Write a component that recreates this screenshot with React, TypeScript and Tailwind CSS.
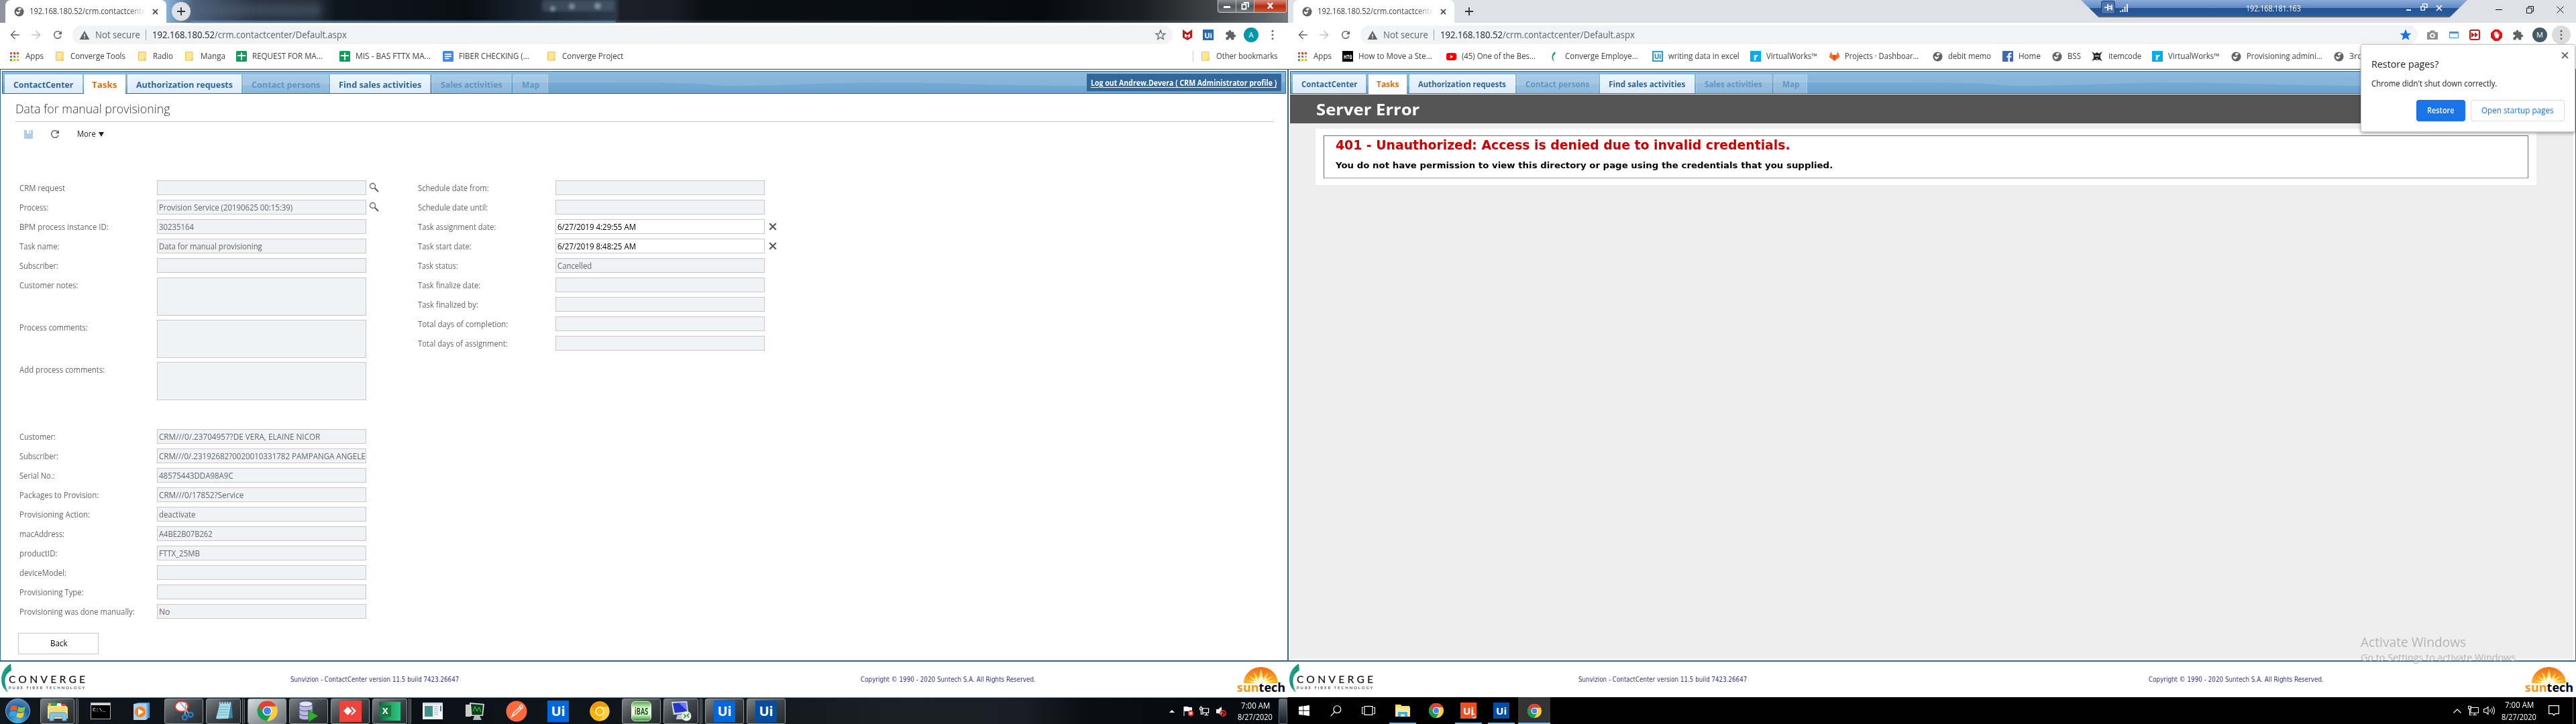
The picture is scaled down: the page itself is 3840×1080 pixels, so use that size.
import React, { useLayoutEffect, useRef, useState } from "react";

/* Text that is fitted horizontally to the width of its box. */
function T({ c, children }: { c: string; children: React.ReactNode }) {
  const outer = useRef<HTMLSpanElement>(null);
  const inner = useRef<HTMLSpanElement>(null);
  const [scale, setScale] = useState(1);
  useLayoutEffect(() => {
    if (outer.current && inner.current && inner.current.offsetWidth > 0) {
      setScale(outer.current.clientWidth / inner.current.offsetWidth);
    }
  }, []);
  return (
    <span ref={outer} className={`flex shrink-0 whitespace-pre leading-none ${c}`}>
      <span ref={inner} className="shrink-0 origin-left" style={{ transform: `scaleX(${scale})` }}>
        {children}
      </span>
    </span>
  );
}

/* ---------- icons ---------- */

type C = { c: string };

const Globe = ({ c }: C) => (
  <svg viewBox="0 0 16 16" className={`shrink-0 ${c}`}>
    <circle cx="8" cy="8" r="7.5" fill="#5f6368" />
    <path d="M9.5 2.2c-2 .3-3.6 1.6-3.4 2.9.2 1 1.800.9 2.600 1.500.8.7.2 1.700-.6 2-1 .4-3.300-.4-4.600-1.400l-.7.9c.3 2.300 2 3.900 3.800 4.500.3-1.400 1.200-1.900 2.200-2.600 1.300-.9 1.400-2.500.4-3.400C8.300 5.800 9.700 4.600 11 4.700l.9-1c-.6-.7-1.500-1.200-2.400-1.500z" fill="#fff" />
  </svg>
);
const Folder = ({ c }: C) => (
  <svg viewBox="0 0 12 14" className={`h-[14px] w-[12px] shrink-0 ${c}`}>
    <path d="M.5.5h10.500v9l.6.600v3H.5z" fill="#ffe694" stroke="#e8c34f" />
    <path d="M9.500 9.500v4" stroke="#e8c34f" />
  </svg>
);
const Apps = ({ c }: C) => (
  <svg viewBox="0 0 13 13" className={`h-[13px] w-[13px] shrink-0 ${c}`}>
    <path d="M0 0h3v3H0zM5 0h3v3H5zM10 0h3v3h-3z" fill="#ea4335" />
    <path d="M0 5h3v3H0z" fill="#34a853" />
    <path d="M5 5h3v3H5z" fill="#4285f4" />
    <path d="M10 5h3v3h-3zM5 10h3v3H5zM10 10h3v3h-3z" fill="#f9b30b" />
    <path d="M0 10h3v3H0z" fill="#34a853" />
  </svg>
);
const Sheet = ({ c }: C) => (
  <svg viewBox="0 0 16 16" className={`size-4 shrink-0 ${c}`}>
    <rect width="16" height="16" rx="1.500" fill="#0f9d58" />
    <path d="M7 2.500h2V6h5v2H9v5.500H7V8H2V6h5z" fill="#fff" />
  </svg>
);
const Doc = ({ c }: C) => (
  <svg viewBox="0 0 16 16" className={`size-4 shrink-0 ${c}`}>
    <rect width="16" height="16" rx="1.500" fill="#4285f4" />
    <path d="M3 4h10v1.700H3zM3 7.200h10v1.700H3zM3 10.500h6.500v1.700H3z" fill="#fff" />
  </svg>
);
const Puzzle = ({ c }: C) => (
  <svg viewBox="0 0 24 24" className={`size-[17px] shrink-0 ${c}`}>
    <path d="M20.500 11H19V7c0-1.100-.9-2-2-2h-4V3.500a2.500 2.500 0 0 0-5 0V5H4c-1.100 0-2 .9-2 2v3.800h1.500a2.700 2.700 0 0 1 0 5.400H2V20c0 1.100.9 2 2 2h3.800v-1.500a2.700 2.700 0 0 1 5.400 0V22H17c1.100 0 2-.9 2-2v-4h1.500a2.500 2.500 0 0 0 0-5z" fill="#5f6368" />
  </svg>
);
const Reload = ({ c }: C) => (
  <svg viewBox="0 0 24 24" className={`shrink-0 ${c}`}>
    <path d="M17.650 6.350A8 8 0 1 0 19.730 14h-2.080A6 6 0 1 1 12 6c1.660 0 3.140.69 4.220 1.780L13 11h7V4z" fill="#5f6368" />
  </svg>
);
const Arrow = ({ c, fill }: C & { fill: string }) => (
  <svg viewBox="0 0 24 24" className={`size-[18px] shrink-0 ${c}`}>
    <path d="M21 11H7l6.300-6.300L12 3.300 3.300 12l8.700 8.700 1.300-1.400L7 13h14z" fill={fill} />
  </svg>
);
const Star = ({ c, full }: C & { full?: boolean }) => (
  <svg viewBox="0 0 24 24" className={`size-[18px] shrink-0 ${c}`}>
    <path d="M12 3l2.500 6.400 6.700.4-5.200 4.300 1.800 6.500L12 17l-5.800 3.600L8 14.100 2.800 9.800l6.700-.4z" fill={full ? "#1a73e8" : "none"} stroke={full ? "#1a73e8" : "#5f6368"} strokeWidth="1.700" />
  </svg>
);
const Cross = ({ c, stroke }: C & { stroke: string }) => (
  <svg viewBox="0 0 10 10" className={`shrink-0 ${c}`}>
    <path d="M1 1l8 8M9 1L1 9" stroke={stroke} strokeWidth="1.700" />
  </svg>
);
const Chrome = ({ c, a = "#db4437", b = "#0f9d58", y = "#ffcd40", i = "#4285f4" }: C & { a?: string; b?: string; y?: string; i?: string }) => (
  <svg viewBox="0 0 48 48" className={`shrink-0 ${c}`}>
    <circle cx="24" cy="24" r="22" fill={y} />
    <path d="M4.950 13A22 22 0 0 1 43.400 14H24A10 10 0 0 0 15.340 29z" fill={a} />
    <path d="M4.950 13L15.340 29A10 10 0 0 0 32.660 29L23 46A22 22 0 0 1 4.950 13z" fill={b} />
    <circle cx="24" cy="24" r="10" fill="#fff" />
    <circle cx="24" cy="24" r="8" fill={i} />
  </svg>
);
const Explorer = ({ c }: C) => (
  <svg viewBox="0 0 32 30" className={`shrink-0 ${c}`}>
    <path d="M2 3h8l2 2h16v4H2z" fill="#e8b83c" />
    <path d="M6 2h8v5H6z" fill="#3c9a4c" />
    <path d="M15 3h6v4h-6z" fill="#f3f3f3" />
    <path d="M22 4h6v4h-6z" fill="#c94a3c" />
    <path d="M1 7h28l2 3v16H1z" fill="#fbe08a" />
    <path d="M3 9h25v14H3z" fill="#f8d873" />
    <path d="M4 29V20c0-2 1-3 3-3h19c2 0 3 1 3 3v9h-6v-6H10v6z" fill="#86c5ea" stroke="#4f97c9" />
  </svg>
);
const Leaf = ({ c }: C) => (
  <svg viewBox="0 0 16 46" className={`shrink-0 ${c}`}>
    <defs>
      <linearGradient id="leaf" x1="0" y1="0" x2="1" y2="1">
        <stop offset="0" stopColor="#2ab7a0" />
        <stop offset="0.500" stopColor="#17927a" />
        <stop offset="1" stopColor="#7fd8c4" />
      </linearGradient>
    </defs>
    <path d="M15 0C6 5 0 14 0 25c0 9 4 17 11 21C7 38 5 31 6 24 7 17 12 13 16 11z" fill="url(#leaf)" />
  </svg>
);
const Sun = () => (
  <svg viewBox="0 0 51 24" className="h-[24px] w-[51px] shrink-0">
    <defs>
      <linearGradient id="sun" x1="0" y1="0" x2="0" y2="1">
        <stop offset="0" stopColor="#f26a1b" />
        <stop offset="1" stopColor="#fbb52a" />
      </linearGradient>
    </defs>
    <path d="M0 24A25.500 24 0 0 1 51 24z" fill="url(#sun)" />
    <path d="M14 24L5 20l10 1-7-8 10 6-3-12 7 10 4-14 3 14 7-9-3 10 11-5-8 7 11 0-10 4z" fill="#fde36a" />
    <path d="M17 24l-3-3 5 0-3-5 6 4 4-9 3 9 6-4-3 5 5 0-4 3z" fill="#fffbe0" />
  </svg>
);

const Ui = ({ c, children = "Ui" }: { c: string; children?: React.ReactNode }) => (
  <span className={`flex shrink-0 items-center justify-center font-['Noto_Sans'] font-bold leading-none ${c}`}>{children}</span>
);

/* ---------- browser chrome ---------- */

function ChromeTab() {
  return (
    <div className="ml-[8px] flex h-full w-[240px] shrink-0 items-center rounded-t-[8px] bg-white pl-[13px]">
      <Globe c="size-[15px]" />
      <T c="ml-[8px] w-[173px] text-[12px] text-[#3c4043] [mask-image:linear-gradient(90deg,#000_85%,transparent)]">192.168.180.52/crm.contactcente</T>
      <Cross c="ml-[10px] size-[9px]" stroke="#3c4043" />
    </div>
  );
}

function Omnibox({ c, star }: { c: string; star?: boolean }) {
  return (
    <>
      <Arrow c="ml-[13px]" fill="#5f6368" />
      <Arrow c="ml-[14px] rotate-180" fill="#bdc1c6" />
      <Reload c="ml-[14px] size-[18px]" />
      <div className={`ml-[13px] flex h-[28px] shrink-0 items-center rounded-full bg-[#f1f3f4] pl-[10px] ${c}`}>
        <svg viewBox="0 0 16 14" className="h-[13px] w-[16px] shrink-0">
          <path d="M8 0l8 14H0z" fill="#5f6368" />
          <path d="M7.200 5h1.600v4.500H7.200zM7.200 10.500h1.600V12H7.200z" fill="#fff" />
        </svg>
        <T c="ml-[8px] w-[67px] text-[14px] text-[#5f6368]">Not secure</T>
        <span className="ml-[8px] h-[16px] w-px shrink-0 bg-[#9aa0a6]" />
        <T c="ml-[9px] w-[93px] text-[14px] text-[#202124]">192.168.180.52</T>
        <T c="w-[197px] text-[14px] text-[#5f6368]">/crm.contactcenter/Default.aspx</T>
        <span className="grow" />
        <Star c="mr-[9px]" full={star} />
      </div>
    </>
  );
}

const Dots = ({ c }: C) => (
  <svg viewBox="0 0 4 16" className={`h-[14px] w-[4px] shrink-0 ${c}`}>
    <path d="M.5 0h3v3h-3zM.5 6.500h3v3h-3zM.5 13h3v3h-3z" fill="#5f6368" />
  </svg>
);

const B = ({ c, children }: { c: string; children: React.ReactNode }) => <T c={`text-[12px] text-[#3c4043] ${c}`}>{children}</T>;

/* ---------- web application frame ---------- */

type TabItem = { label: string; box: string; text: string; kind: "on" | "off" | "active" };

function AppHeader({ tabs, y, children }: { tabs: TabItem[]; y: string; children?: React.ReactNode }) {
  return (
    <div className="relative ml-[2px] mt-[2px] flex h-[34px] w-[1914px] shrink-0 items-end border border-[#336699] bg-gradient-to-b from-[#8cbadd] to-[#82b1d8]">
      <svg viewBox="0 0 1912 32" preserveAspectRatio="none" className="absolute inset-0 h-full w-full">
        <defs>
          <linearGradient id="wave" x1="0" y1="0" x2="0" y2="1">
            <stop offset="0" stopColor="#76abd6" />
            <stop offset="1" stopColor="#6ba1d1" />
          </linearGradient>
        </defs>
        <path d="M0 16C120 22 240 22 360 20S600 16 860 16 1020 21 1090 21 1240 16 1320 16 1500 21 1600 21 1800 17 1912 16V32H0z" fill="url(#wave)" />
      </svg>
      <div className="relative flex items-end">
        {tabs.map((t) => (
          <div
            key={t.label}
            className={`flex shrink-0 items-center ${t.box} ${
              t.kind === "active"
                ? "-mb-px h-[29px] bg-[#fcfdfe] text-[#e0700f]"
                : t.kind === "on"
                  ? "h-[28px] border-x border-t border-white/60 bg-gradient-to-b from-[#edf6fd] to-[#dbeafa] text-[#2f6699]"
                  : "h-[28px] border-x border-t border-white/20 bg-white/25 text-[#6096c3]"
            }`}
          >
            <T c={`text-[13px] font-bold ${y} ${t.text}`}>{t.label}</T>
          </div>
        ))}
      </div>
      {children}
    </div>
  );
}

const leftTabs: TabItem[] = [
  { label: "ContactCenter", box: "ml-[3px] w-[116px] pl-[12px]", text: "w-[89px]", kind: "on" },
  { label: "Tasks", box: "ml-[2px] w-[62px] pl-[12px]", text: "w-[37px]", kind: "active" },
  { label: "Authorization requests", box: "ml-[3px] w-[170px] pl-[12px]", text: "w-[144px]", kind: "on" },
  { label: "Contact persons", box: "ml-[2px] w-[128px] pl-[12px]", text: "w-[102px]", kind: "off" },
  { label: "Find sales activities", box: "ml-[2px] w-[149px] pl-[12px]", text: "w-[123px]", kind: "on" },
  { label: "Sales activities", box: "ml-[3px] w-[118px] pl-[12px]", text: "w-[92px]", kind: "off" },
  { label: "Map", box: "ml-[3px] w-[52px] pl-[12px]", text: "w-[26px]", kind: "off" },
];
const rightTabs: TabItem[] = [
  { label: "ContactCenter", box: "ml-[3px] w-[109px] pl-[12px]", text: "w-[83px]", kind: "on" },
  { label: "Tasks", box: "ml-[4px] w-[57px] pl-[12px]", text: "w-[33px]", kind: "active" },
  { label: "Authorization requests", box: "ml-[4px] w-[158px] pl-[12px]", text: "w-[131px]", kind: "on" },
  { label: "Contact persons", box: "ml-[2px] w-[122px] pl-[12px]", text: "w-[95px]", kind: "off" },
  { label: "Find sales activities", box: "ml-[2px] w-[141px] pl-[12px]", text: "w-[114px]", kind: "on" },
  { label: "Sales activities", box: "ml-[2px] w-[113px] pl-[12px]", text: "w-[86px]", kind: "off" },
  { label: "Map", box: "ml-[3px] w-[50px] pl-[12px]", text: "w-[25px]", kind: "off" },
];

function Footer() {
  return (
    <div className="flex h-[53px] shrink-0 bg-white font-['DejaVu_Sans_Condensed','DejaVu_Sans',sans-serif]">
      <Leaf c="ml-[2px] mt-[2px] h-[45px] w-[15px]" />
      <div className="-ml-[4px] mt-[19px] flex w-[116px] flex-col font-['Lato',sans-serif]">
        <T c="w-[118px] text-[15px] font-semibold tracking-[4px] text-[#222]">CONVERGE</T>
        <T c="mt-[2px] w-[115px] text-[6px] font-semibold tracking-[2px] text-[#444]">PURE FIBER TECHNOLOGY</T>
      </div>
      <T c="ml-[304px] mt-[21px] w-[251px] text-[11px] text-[#333388]">Sunvizion - ContactCenter version 11.5 build 7423.26647</T>
      <T c="ml-[599px] mt-[21px] w-[261px] text-[11px] text-[#333388]">Copyright © 1990 - 2020 Suntech S.A. All Rights Reserved.</T>
      <div className="ml-[300px] mt-[8px] flex flex-col items-start">
        <span className="ml-[10px] flex">
          <Sun />
        </span>
        <T c="-mt-[3px] w-[72px] font-['Open_Sans'] text-[18px] font-bold text-black">
          <span className="text-[#f7941d]">sun</span>tech
        </T>
      </div>
    </div>
  );
}

/* ---------- form ---------- */

type Field = { label: string; lw: string; value?: string; vw?: string; tall?: boolean; edit?: boolean; icon?: "search" | "clear" };

function Row({ f }: { f: Field }) {
  return (
    <div className={`flex items-start ${f.tall ? "h-[57px]" : "h-[23px]"}`}>
      <div className="flex h-[23px] w-[205px] shrink-0 items-center text-[12px] text-[#666]">
        <T c={f.lw}>{f.label}</T>
      </div>
      <div className={`flex w-[312px] shrink-0 overflow-hidden border border-[#c8c8c8] pl-[2px] pt-[5px] ${f.tall ? "h-[57px]" : "h-[22px]"} ${f.edit ? "bg-white text-black" : "bg-[#f1f2f5] text-[#666]"}`}>
        {f.value && <T c={`text-[12px] ${f.vw}`}>{f.value}</T>}
      </div>
      {f.icon === "search" && (
        <svg viewBox="0 0 15 15" className="ml-[4px] mt-[3px] size-[15px] shrink-0">
          <circle cx="5.500" cy="5.500" r="4" fill="none" stroke="#666" strokeWidth="1.300" />
          <path d="M8.500 8.500l5.500 5.500" stroke="#555" strokeWidth="2" />
        </svg>
      )}
      {f.icon === "clear" && <Cross c="ml-[6px] mt-[5px] size-[12px]" stroke="#555" />}
    </div>
  );
}

const mainFields: Field[] = [
  { label: "CRM request", lw: "w-[68px]", icon: "search" },
  { label: "Process:", lw: "w-[43px]", value: "Provision Service (20190625 00:15:39)", vw: "w-[199px]", icon: "search" },
  { label: "BPM process instance ID:", lw: "w-[133px]", value: "30235164", vw: "w-[52px]" },
  { label: "Task name:", lw: "w-[59px]", value: "Data for manual provisioning", vw: "w-[154px]" },
  { label: "Subscriber:", lw: "w-[58px]" },
  { label: "Customer notes:", lw: "w-[87px]", tall: true },
  { label: "Process comments:", lw: "w-[102px]", tall: true },
  { label: "Add process comments:", lw: "w-[127px]", tall: true },
];
const dateFields: Field[] = [
  { label: "Schedule date from:", lw: "w-[106px]" },
  { label: "Schedule date until:", lw: "w-[104px]" },
  { label: "Task assignment date:", lw: "w-[116px]", value: "6/27/2019 4:29:55 AM", vw: "w-[117px]", edit: true, icon: "clear" },
  { label: "Task start date:", lw: "w-[80px]", value: "6/27/2019 8:48:25 AM", vw: "w-[117px]", edit: true, icon: "clear" },
  { label: "Task status:", lw: "w-[60px]", value: "Cancelled", vw: "w-[51px]" },
  { label: "Task finalize date:", lw: "w-[93px]" },
  { label: "Task finalized by:", lw: "w-[90px]" },
  { label: "Total days of completion:", lw: "w-[134px]" },
  { label: "Total days of assignment:", lw: "w-[134px]" },
];
const provisioningFields: Field[] = [
  { label: "Customer:", lw: "w-[54px]", value: "CRM///0/.23704957?DE VERA, ELAINE NICOR", vw: "w-[240px]" },
  { label: "Subscriber:", lw: "w-[58px]", value: "CRM///0/.23192682?0020010331782 PAMPANGA ANGELE", vw: "w-[308px]" },
  { label: "Serial No.:", lw: "w-[53px]", value: "48575443DDA98A9C", vw: "w-[111px]" },
  { label: "Packages to Provision:", lw: "w-[118px]", value: "CRM///0/17852?Service", vw: "w-[126px]" },
  { label: "Provisioning Action:", lw: "w-[105px]", value: "deactivate", vw: "w-[54px]" },
  { label: "macAddress:", lw: "w-[67px]", value: "A4BE2B07B262", vw: "w-[80px]" },
  { label: "productID:", lw: "w-[56px]", value: "FTTX_25MB", vw: "w-[61px]" },
  { label: "deviceModel:", lw: "w-[70px]" },
  { label: "Provisioning Type:", lw: "w-[96px]" },
  { label: "Provisioning was done manually:", lw: "w-[172px]", value: "No", vw: "w-[16px]" },
];

/* ---------- windows ---------- */

function LeftWindow() {
  return (
    <div className="flex h-[1080px] w-[1920px] shrink-0 flex-col overflow-hidden bg-white">
      <div className="relative flex h-[34px] shrink-0 items-center bg-[linear-gradient(90deg,#8d949c_0,#8d949c_8px,#86aed6_250px,#4b6079_290px,#2a3542_380px,#26313d_470px,#0e161d_500px,#090e14_700px,#1f2b38_820px,#2b3846_918px,#1b1e26_925px,#1a1d25_1000px,#0a0f13_1050px,#070b10_1560px,#1a1e22_1700px,#333639_1770px,#5c6063_1880px,#777b7e_1920px)]">
        <span className="absolute bottom-0 left-[284px] h-[3px] w-[634px] bg-[#6f9cc9]/80 blur-[1px]" />
        <span className="absolute bottom-0 left-[920px] h-[5px] w-[1000px] bg-gradient-to-b from-transparent to-[#5a7390]/50" />
        <span className="absolute left-[290px] top-[6px] h-[18px] w-[190px] rounded-full bg-[#55677c]/40 blur-[5px]" />
        <span className="absolute left-[808px] top-0 h-[17px] w-[108px] rounded bg-[#66798d]/40 blur-[2px]" />
        <span className="absolute left-[820px] top-[9px] size-[8px] rounded-full bg-[#a9bccf]/60 blur-[2px]" />
        <span className="absolute left-[848px] top-[5px] size-[9px] rounded-full bg-[#a9bccf]/60 blur-[2px]" />
        <span className="absolute left-[886px] top-[4px] size-[10px] rounded-full bg-[#a9bccf]/60 blur-[2px]" />
        <div className="relative flex h-full w-full items-center">
          <ChromeTab />
          <span className="ml-[8px] flex size-[28px] items-center justify-center rounded-full bg-[#dee1e6]">
            <svg viewBox="0 0 12 12" className="size-[12px]">
              <path d="M6 0v12M0 6h12" stroke="#333" strokeWidth="1.800" />
            </svg>
          </span>
          <span className="grow" />
          <div className="mr-[2px] flex h-[19px] items-stretch self-start overflow-hidden rounded-b-[4px] border border-t-0 border-[#c9cdd1]">
            <span className="flex w-[27px] items-end justify-center border-r border-[#bbb] bg-gradient-to-b from-[#8d9195] via-[#53575b] to-[#75797d] pb-[6px]">
              <span className="h-[3px] w-[10px] bg-white" />
            </span>
            <span className="flex w-[27px] items-center justify-center border-r border-[#bbb] bg-gradient-to-b from-[#8d9195] via-[#53575b] to-[#75797d]">
              <svg viewBox="0 0 12 12" className="size-[12px]">
                <path d="M4 1h7v7M1.500 3.500h6v7h-6z" fill="none" stroke="#fff" strokeWidth="1.800" />
              </svg>
            </span>
            <span className="flex w-[47px] items-center justify-center bg-gradient-to-b from-[#d98a7c] via-[#b62c12] to-[#d0542f]">
              <svg viewBox="0 0 10 10" className="mb-[2px] h-[9px] w-[11px]">
                <path d="M1 0l8 10M9 0L1 10" stroke="#fff" strokeWidth="2.600" />
              </svg>
            </span>
          </div>
        </div>
      </div>
      <div className="flex h-[36px] shrink-0 items-center">
        <Omnibox c="w-[1640px]" />
        <svg viewBox="0 0 14 16" className="ml-[15px] h-[16px] w-[14px] shrink-0">
          <path d="M0 0l7 5 7-5v12l-7 4-7-4z" fill="#c01818" />
          <path d="M3 6l4 3 4-3v5l-4 2-4-2z" fill="#fff" />
          <path d="M5.500 9.500L7 10.500l1.500-1V12L7 13l-1.500-1z" fill="#c01818" />
        </svg>
        <Ui c="ml-[16px] size-[16px] bg-[#2a67b2] text-[11px] text-white" />
        <Puzzle c="ml-[17px]" />
        <span className="ml-[11px] flex size-[22px] items-center justify-center rounded-full bg-[#0097a7] text-[11px] text-white">A</span>
        <Dots c="ml-[19px]" />
      </div>
      <div className="flex h-[28px] shrink-0 items-center">
        <Apps c="ml-[15px]" />
        <B c="ml-[10px] w-[27px]">Apps</B>
        <Folder c="ml-[18px]" />
        <B c="ml-[10px] w-[82px]">Converge Tools</B>
        <Folder c="ml-[19px]" />
        <B c="ml-[10px] w-[30px]">Radio</B>
        <Folder c="ml-[18px]" />
        <B c="ml-[11px] w-[37px]">Manga</B>
        <Sheet c="ml-[16px]" />
        <B c="ml-[8px] w-[105px]">REQUEST FOR MA...</B>
        <Sheet c="ml-[25px]" />
        <B c="ml-[8px] w-[112px]">MIS - BAS FTTX MA...</B>
        <Doc c="ml-[18px]" />
        <B c="ml-[8px] w-[105px]">FIBER CHECKING (...</B>
        <Folder c="ml-[27px]" />
        <B c="ml-[10px] w-[91px]">Converge Project</B>
        <span className="grow" />
        <span className="h-[16px] w-px bg-[#ccd0d4]" />
        <Folder c="ml-[12px]" />
        <B c="ml-[10px] mr-[15px] w-[92px]">Other bookmarks</B>
      </div>
      <div className="h-[5px] shrink-0 border-b border-[#d3d5d8]" />
      <div className="flex h-[884px] shrink-0 flex-col border border-b-2 border-[#336699]">
        <AppHeader tabs={leftTabs} y="mt-[2px]">
          <span className="grow" />
          <span className="relative mb-[3px] mr-[6px] flex h-[26px] w-[290px] items-center bg-[#336699] pl-[6px] pt-[2px]">
            <T c="w-[277px] text-[12px] font-bold text-white underline underline-offset-2">Log out Andrew.Devera ( CRM Administrator profile )</T>
          </span>
        </AppHeader>
        <div className="mx-[20px] ml-[22px] flex h-[42px] shrink-0 items-center border-b border-[#c8c8c8] pt-[3px]">
          <T c="w-[230px] text-[18px] font-light text-[#333]">Data for manual provisioning</T>
        </div>
        <div className="flex h-[36px] shrink-0 items-center pl-[35px]">
          <svg viewBox="0 0 13 13" className="size-[13px]">
            <path d="M0 0h13v13H0z" fill="#b3cde6" />
            <path d="M4 0h6v5H4z" fill="#fff" />
            <path d="M7 1h2v3H7z" fill="#b3cde6" />
          </svg>
          <Reload c="ml-[24px] size-[18px]" />
          <T c="ml-[24px] w-[28px] text-[12px] text-[#222]">More</T>
          <svg viewBox="0 0 8 7" className="ml-[4px] h-[7px] w-[8px]">
            <path d="M0 0h8L4 7z" fill="#222" />
          </svg>
        </div>
        <div className="ml-[28px] mt-[51px] flex shrink-0">
          <div className="flex w-[594px] flex-col gap-[6px]">
            {mainFields.map((f) => (
              <Row key={f.label} f={f} />
            ))}
          </div>
          <div className="flex flex-col gap-[6px]">
            {dateFields.map((f) => (
              <Row key={f.label} f={f} />
            ))}
          </div>
        </div>
        <div className="ml-[28px] mt-[43px] flex shrink-0 flex-col gap-[6px]">
          {provisioningFields.map((f) => (
            <Row key={f.label} f={f} />
          ))}
        </div>
        <button className="ml-[26px] mt-[20px] flex h-[32px] w-[120px] shrink-0 items-center justify-center border border-[#c8c8c8] bg-white">
          <T c="w-[25px] text-[12px] text-black">Back</T>
        </button>
      </div>
      <Footer />
      <Win7Taskbar />
    </div>
  );
}

function Btn({ c, hot, stack, children }: { c: string; hot?: boolean; stack?: boolean; children: React.ReactNode }) {
  return (
    <span className={`flex h-[38px] shrink-0 gap-[2px] ${c}`}>
      <span className={`flex h-full w-full items-center justify-center rounded-[3px] border border-[#8f9599] ${hot ? "bg-gradient-to-br from-[#d8dcde] via-[#9da2a5] to-[#6d7276]" : "bg-gradient-to-br from-[#7c8185] via-[#3f4448] to-[#24292d]"}`}>{children}</span>
      {stack && <span className="h-full w-[4px] shrink-0 rounded-r-[3px] border-x border-[#6f757a] bg-[#2b3034]" />}
    </span>
  );
}

function Win7Taskbar() {
  return (
    <div className="flex h-[40px] shrink-0 items-center border-t border-[#7f919c] bg-[linear-gradient(90deg,#10161b_0,#0c1117_640px,#12191e_1150px,#1b2026_1350px,#1a1d25_1520px,#0a0e13_1620px,#05090d_1920px)]">
      <span className="ml-[8px] flex size-[37px] shrink-0 items-center justify-center rounded-full border border-[#7fb4d8] bg-[radial-gradient(circle_at_50%_90%,#3fb8ec,#1f5f9c_55%,#6d9cc4)]">
        <svg viewBox="0 0 24 24" className="size-[26px]">
          <path d="M2 5.500c3-1.800 6-1.800 9-.2l-1.300 6.200c-3-1.600-6-1.500-9 .3z" fill="#f0592a" />
          <path d="M12.300 5.800c3 1.600 6 1.700 9.700-.3l-1.500 6.300c-3.500 2-6.500 1.900-9.500.2z" fill="#8cc63e" />
          <path d="M.6 13.200c3-1.800 6-1.800 9-.2L8.300 19.200c-3-1.600-5.500-1.500-8.300.3z" fill="#37a4e0" />
          <path d="M10.800 13.500c3 1.600 6 1.700 9.500-.3l-1.500 6.300c-3.500 2-6.300 1.900-9.200.2z" fill="#fdc92e" />
        </svg>
      </span>
      <Btn c="ml-[15px] w-[57px]" stack>
        <Explorer c="h-[30px] w-[32px]" />
      </Btn>
      <span className="ml-[18px] flex h-[25px] w-[30px] shrink-0 flex-col border border-[#aaa] bg-black">
        <span className="h-[3px] bg-[#d5d8e0]" />
        <span className="pl-[2px] pt-[3px] font-['Liberation_Mono'] text-[8px] leading-none text-white">C:\_</span>
      </span>
      <svg viewBox="0 0 28 28" className="ml-[33px] h-[28px] w-[28px] shrink-0">
        <path d="M7 1h18v23H7z" fill="#4f93c9" />
        <path d="M4 2h18v24H4z" fill="#7db6e0" />
        <path d="M1 3h19v24H1z" fill="#a8d2ef" />
        <circle cx="11" cy="15" r="8" fill="#f58220" />
        <path d="M8 10l8 5-8 5z" fill="#fff" />
      </svg>
      <Btn c="ml-[19px] w-[58px]">
        <svg viewBox="0 0 32 32" className="size-[31px]">
          <ellipse cx="12" cy="9" rx="10" ry="8" fill="#f4f4f6" stroke="#d33" strokeWidth="2" />
          <path d="M10 3l13 17M19 3L17 22" stroke="#9fb0bf" strokeWidth="2" />
          <circle cx="17" cy="26" r="3.500" fill="none" stroke="#2c7fd0" strokeWidth="2.400" />
          <circle cx="26" cy="22" r="3.500" fill="none" stroke="#2c7fd0" strokeWidth="2.400" />
        </svg>
      </Btn>
      <Btn c="ml-[4px] w-[58px]" stack>
        <svg viewBox="0 0 30 30" className="size-[29px]">
          <path d="M8 2l19 0 2 24-24 2z" fill="#3f86a6" />
          <path d="M9 4h17L22 27H3z" fill="#a7dbe8" />
          <path d="M8 9h15M7 13h15M6 17h15M5 21h16" stroke="#6fb2c5" />
          <path d="M9 1v4M13 1v4M17 1v4M21 1v4M25 1v4" stroke="#ddd" strokeWidth="1.500" />
        </svg>
      </Btn>
      <Btn c="ml-[4px] w-[58px]" hot>
        <Chrome c="size-[33px]" />
      </Btn>
      <Btn c="ml-[4px] w-[58px]">
        <svg viewBox="0 0 32 32" className="size-[32px]">
          <path d="M2 5v20c0 5 20 5 20 0V5z" fill="#b9b9dc" />
          <ellipse cx="12" cy="5" rx="10" ry="4" fill="#e6e6f7" stroke="#55558e" />
          <path d="M2 5v20c0 5 20 5 20 0V5M2 12c0 5 20 5 20 0M2 19c0 5 20 5 20 0" fill="none" stroke="#55558e" />
          <path d="M16 14l14 9-14 9z" fill="#2fae2f" stroke="#157015" />
        </svg>
      </Btn>
      <Btn c="ml-[4px] w-[58px]">
        <span className="flex h-[32px] w-[33px] items-center justify-center bg-[#ef443b]">
          <svg viewBox="0 0 22 14" className="h-[13px] w-[20px]">
            <path d="M7 0l7 7-7 7-7-7z" fill="#fff" />
            <path d="M13 1l6 6-6 6" fill="none" stroke="#fff" strokeWidth="2.400" />
          </svg>
        </span>
      </Btn>
      <Btn c="ml-[4px] w-[58px]" stack>
        <span className="flex h-[28px] w-[32px] items-center bg-gradient-to-r from-[#185c37] via-[#21a366] to-[#33c481]">
          <span className="flex h-[17px] w-[18px] items-center justify-center bg-[#107c41] text-[13px] font-bold text-white">X</span>
        </span>
      </Btn>
      <svg viewBox="0 0 30 25" className="ml-[17px] h-[25px] w-[30px] shrink-0">
        <path d="M0 0h30v25H0z" fill="#f2f4f6" />
        <path d="M0 0h30v3H0z" fill="#d5dbe4" />
        <path d="M3 5h12v16H3z" fill="#3f8f8a" />
        <path d="M17 6h6M17 9h6M17 12h6M17 15h6M17 18h6" stroke="#a9b1b8" />
        <path d="M26 5h2v8h-2z" fill="#3e6fc0" />
      </svg>
      <svg viewBox="0 0 30 28" className="ml-[33px] h-[28px] w-[30px] shrink-0">
        <path d="M1 4h8v18H1z" fill="#c8cbc9" />
        <path d="M7 1l22 2-2 18-18 0z" fill="#d9dbd9" />
        <path d="M9 3l18 1.500-1.500 15-15 0z" fill="#123e1c" />
        <path d="M12 14l3-7 3 7 3-6 3 7" fill="none" stroke="#3fdc4a" strokeWidth="1" />
        <path d="M14 21h8l3 6H12z" fill="#b5b8b5" />
      </svg>
      <svg viewBox="0 0 32 32" className="ml-[31px] size-[32px] shrink-0">
        <circle cx="16" cy="16" r="15.500" fill="#fb6a3d" />
        <path d="M9 24l3-6 9-8 2 2-8 8z" fill="none" stroke="#fff" strokeWidth="1.500" />
        <circle cx="23" cy="9" r="2.300" fill="none" stroke="#fff" strokeWidth="1.300" />
      </svg>
      <Ui c="ml-[30px] size-[32px] bg-[#0067df] text-[20px] text-white" />
      <Chrome c="ml-[30px] size-[32px]" a="#ed9a0a" b="#f9b500" y="#fdd04b" i="#fbbc05" />
      <Btn c="ml-[17px] w-[58px]">
        <span className="flex size-[30px] items-center justify-center rounded-[6px] border border-[#dff2da] bg-[linear-gradient(#4fae4a,#e7f7dd_35%,#e7f7dd_65%,#2f9a2c)]">
          <T c="w-[20px] text-[15px] font-bold text-[#14571a]">
            <span className="text-[#b4231d]">i</span>BAS
          </T>
        </span>
      </Btn>
      <Btn c="ml-[4px] w-[58px]" stack>
        <svg viewBox="0 0 32 32" className="size-[31px]">
          <path d="M1 2l24-1 2 18-23 3z" fill="#d5dbe2" />
          <path d="M3 4l20-1 2 14-19 2z" fill="#2336c9" />
          <path d="M12 3l11 0 2 13z" fill="#6c7df0" />
          <path d="M10 22l8-1 3 8H8z" fill="#c2c8ce" />
          <circle cx="24" cy="24" r="7.500" fill="#e8ece6" />
          <path d="M20 21l3 3-3 3M28 20l-3 3 3 3" fill="none" stroke="#2f9a2c" strokeWidth="1.600" />
        </svg>
      </Btn>
      <Btn c="ml-[4px] w-[58px]">
        <Ui c="size-[32px] bg-[#0067df] text-[20px] text-white" />
      </Btn>
      <Btn c="ml-[4px] w-[58px]">
        <Ui c="size-[32px] bg-[#034ea2] text-[20px] text-white" />
      </Btn>
      <span className="grow" />
      <svg viewBox="0 0 8 4" className="h-[4px] w-[8px]">
        <path d="M0 4l4-4 4 4z" fill="#fff" />
      </svg>
      <svg viewBox="0 0 16 16" className="ml-[13px] size-[16px]">
        <path d="M1 1v14M1.500 1.500h5l2 1h4v6h-4l-2-1h-5z" fill="#fff" stroke="#fff" />
        <circle cx="11" cy="11" r="4.500" fill="#d42a1e" />
        <path d="M9 9l4 4M13 9l-4 4" stroke="#fff" strokeWidth="1.500" />
      </svg>
      <svg viewBox="0 0 16 16" className="ml-[8px] size-[15px]">
        <path d="M5 4h9.500v7H5zM8 14.500h6M11 11v3M2.500 0v3M0.500 3h4v3h-4zM2.500 6v7h4" fill="none" stroke="#fff" strokeWidth="1.300" />
      </svg>
      <svg viewBox="0 0 16 16" className="ml-[9px] size-[16px]">
        <path d="M1 5h3l5-4v13L4 11H1z" fill="#f1f1f1" />
        <circle cx="11" cy="11" r="4" fill="none" stroke="#d42a1e" strokeWidth="1.800" />
        <path d="M8.500 8.500l5 5" stroke="#d42a1e" strokeWidth="1.800" />
      </svg>
      <div className="ml-[14px] flex w-[58px] flex-col items-center gap-[5px] pt-[2px] text-[12px] text-white">
        <T c="w-[43px]">7:00 AM</T>
        <T c="w-[52px]">8/27/2020</T>
      </div>
      <span className="ml-[6px] mr-[1px] h-[38px] w-[13px] rounded-[2px] border border-[#5d666c] bg-gradient-to-b from-[#6a7378] to-[#151b20]" />
    </div>
  );
}

function RightWindow() {
  return (
    <div className="relative flex h-[1080px] w-[1920px] shrink-0 flex-col overflow-hidden bg-white">
      <div className="flex h-[34px] shrink-0 items-center bg-[#dee1e6]">
        <ChromeTab />
        <svg viewBox="0 0 12 12" className="ml-[16px] size-[12px] shrink-0">
          <path d="M6 0v12M0 6h12" stroke="#333" strokeWidth="1.800" />
        </svg>
        <div className="ml-[906px] flex h-[26px] w-[576px] shrink-0 items-start self-start bg-[linear-gradient(#8cabd9_0,#5f8ac2_45%,#235294_46%,#2a5ba0_92%,#5b6b7d_93%)] text-white [clip-path:polygon(0_0,100%_0,95.400%_100%,4.600%_100%)]">
          <span className="ml-[30px] mt-[1px] flex h-[20px] w-[21px] shrink-0 items-center justify-center rounded-[3px] border border-[#25456f] bg-[#4c76ae]">
            <svg viewBox="0 0 12 10" className="h-[10px] w-[12px]">
              <path d="M0 5h5M5 0v10M5 3.500h6M5 6.500h6M11 1v8" fill="none" stroke="#fff" strokeWidth="1.600" />
            </svg>
          </span>
          <svg viewBox="0 0 12 12" className="ml-[7px] mt-[6px] size-[12px] shrink-0">
            <path d="M1 12v-2M4.300 12V8M7.600 12V4M11 12V0" stroke="#fff" strokeWidth="1.800" />
          </svg>
          <T c="ml-[176px] mt-[7px] w-[82px] text-[12px]">192.168.181.163</T>
          <span className="ml-[157px] mt-[14px] h-[2px] w-[7px] shrink-0 bg-white" />
          <svg viewBox="0 0 12 12" className="ml-[14px] mt-[5px] size-[11px] shrink-0">
            <path d="M4 4V1h7v6H8M1 5h6v6H1z" fill="none" stroke="#fff" strokeWidth="1.500" />
          </svg>
          <Cross c="ml-[12px] mt-[7px] size-[10px]" stroke="#fff" />
        </div>
        <span className="ml-[42px] mt-[-5px] h-px w-[10px] shrink-0 bg-black" />
        <svg viewBox="0 0 11 11" className="mb-[6px] ml-[36px] size-[11px] shrink-0">
          <path d="M3 3V.5h7.500V8H8M.5 3h7.500v7.500H.5z" fill="none" stroke="#111" />
        </svg>
        <svg viewBox="0 0 11 11" className="mb-[6px] ml-[34px] size-[11px] shrink-0">
          <path d="M.5.5l10 10M10.500.5l-10 10" stroke="#111" />
        </svg>
      </div>
      <div className="flex h-[36px] shrink-0 items-center">
        <Omnibox c="w-[1576px]" star />
        <svg viewBox="0 0 16 14" className="ml-[14px] h-[14px] w-[16px] shrink-0">
          <path d="M0 3h4l1-2.500h6L12 3h4v11H0z" fill="#8d9095" />
          <circle cx="8" cy="8" r="3.800" fill="#fff" />
          <circle cx="8" cy="8" r="2" fill="#8d9095" />
        </svg>
        <span className="ml-[17px] h-[10px] w-[14px] shrink-0 rounded-[1px] border border-t-[3px] border-[#4a90e2] bg-[#eef5fd]" />
        <span className="ml-[16px] flex size-[16px] shrink-0 items-center justify-center rounded-[3px] border-2 border-[#b5231f] bg-white">
          <svg viewBox="0 0 10 8" className="h-[8px] w-[10px]">
            <path d="M0 0l5 4-5 4zM5 0l5 4-5 4z" fill="#b5231f" />
          </svg>
        </span>
        <svg viewBox="0 0 16 16" className="ml-[16px] size-[17px] shrink-0">
          <path d="M5 0h6l5 5v6l-5 5H5l-5-5V5z" fill="#e01515" />
          <path d="M5 8V4h1v3h1V3h1v4h1V4h1v4l1-1.500h1L10 12H7z" fill="#fff" stroke="#fff" strokeWidth=".6" />
        </svg>
        <Puzzle c="ml-[15px]" />
        <span className="ml-[13px] flex size-[22px] shrink-0 items-center justify-center rounded-full bg-[#455a64] text-[11px] text-white">M</span>
        <span className="ml-[7px] flex size-[28px] shrink-0 items-center justify-center rounded-full bg-[#dcdcdd]">
          <Dots c="" />
        </span>
      </div>
      <div className="flex h-[28px] shrink-0 items-center">
        <Apps c="ml-[15px]" />
        <B c="ml-[10px] w-[27px]">Apps</B>
        <span className="ml-[16px] flex size-[16px] shrink-0 items-center justify-center bg-black">
          <T c="w-[13px] text-[9px] font-bold text-white">HTG</T>
        </span>
        <B c="ml-[8px] w-[110px]">How to Move a Ste...</B>
        <span className="ml-[21px] flex h-[11px] w-[15px] shrink-0 items-center justify-center rounded-[3px] bg-[#ff0000]">
          <svg viewBox="0 0 4 5" className="h-[5px] w-[4px]">
            <path d="M0 0l4 2.500L0 5z" fill="#fff" />
          </svg>
        </span>
        <B c="ml-[8px] w-[110px]">(45) One of the Bes...</B>
        <Leaf c="ml-[24px] h-[15px] w-[6px]" />
        <B c="ml-[14px] w-[109px]">Converge Employe...</B>
        <Ui c="ml-[21px] size-[16px] border-2 border-[#2a9fd6] bg-white text-[10px] text-[#1488c8]" />
        <B c="ml-[8px] w-[106px]">writing data in excel</B>
        <Ui c="ml-[16px] size-[16px] bg-[#00aeef] text-[15px] text-white">r</Ui>
        <B c="ml-[8px] w-[76px]">VirtualWorks™</B>
        <svg viewBox="0 0 17 15" className="ml-[17px] h-[14px] w-[17px] shrink-0">
          <path d="M8.500 15L0 8.500 3 0l2.500 5.500h6L14 0l3 8.500z" fill="#fc6d26" />
          <path d="M8.500 15L5.500 5.500h6z" fill="#e24329" />
        </svg>
        <B c="ml-[7px] w-[110px]">Projects · Dashboar...</B>
        <Globe c="ml-[21px] size-[15px]" />
        <B c="ml-[8px] w-[64px]">debit memo</B>
        <svg viewBox="0 0 16 16" className="ml-[17px] size-[16px] shrink-0">
          <rect width="16" height="16" rx="1" fill="#4267b2" />
          <path d="M11 16V9.800h2.200l.3-2.400H11V6c0-.7.200-1.100 1.200-1.100h1.300V2.700c-.2 0-1-.1-1.900-.1-1.900 0-3.100 1.100-3.100 3.200v1.600H6.300v2.400h2.200V16z" fill="#fff" />
        </svg>
        <B c="ml-[8px] w-[33px]">Home</B>
        <Globe c="ml-[17px] size-[15px]" />
        <B c="ml-[8px] w-[20px]">BSS</B>
        <svg viewBox="0 0 16 15" className="ml-[16px] h-[15px] w-[16px] shrink-0">
          <path d="M0 0l5 3 3-2 3 2 5-3-3 5 0 5 3 4-5-2-3 1-3-1-5 2 3-4 0-5z" fill="#222" />
          <path d="M4.500 5.500h7v2h-7zM7 10h2v2H7z" fill="#bbb" />
        </svg>
        <B c="ml-[9px] w-[49px]">itemcode</B>
        <Ui c="ml-[16px] size-[16px] bg-[#00aeef] text-[15px] text-white">r</Ui>
        <B c="ml-[8px] w-[77px]">VirtualWorks™</B>
        <Globe c="ml-[17px] size-[15px]" />
        <B c="ml-[8px] w-[113px]">Provisioning admini...</B>
        <Globe c="ml-[17px] size-[15px]" />
        <B c="ml-[8px] w-[20px]">3rd</B>
      </div>
      <div className="h-[5px] shrink-0 border-b border-[#d3d5d8]" />
      <div className="flex h-[884px] shrink-0 flex-col border border-b-2 border-[#336699]">
        <AppHeader tabs={rightTabs} y="" />
        <div className="mb-[2px] ml-[2px] mr-[3px] mt-px flex grow flex-col bg-[#eeeeee]">
          <div className="flex h-[43px] shrink-0 items-center bg-[#555555] pl-[39px]">
            <T c="w-[154px] text-[24px] font-bold text-white">Server Error</T>
          </div>
          <div className="ml-[38px] mt-[8px] flex h-[84px] w-[1820px] shrink-0 bg-white pl-[12px] pt-[10px] font-['DejaVu_Sans',sans-serif]">
            <div className="flex h-[64px] w-[1796px] flex-col border border-[#6e6e6e] border-b-[#999] pl-[17px]">
              <T c="mt-[4px] w-[678px] text-[19px] font-bold text-[#cc0000]">401 - Unauthorized: Access is denied due to invalid credentials.</T>
              <T c="mt-[14px] w-[741px] text-[13px] font-bold text-black">You do not have permission to view this directory or page using the credentials that you supplied.</T>
            </div>
          </div>
        </div>
      </div>
      <Footer />
      <Win10Taskbar />

      {/* restore bubble */}
      <div className="absolute left-[1599px] top-[66px] flex h-[131px] w-[320px] flex-col rounded-[3px] border border-[#c4c6c9] bg-white pl-[15px] shadow-[0_2px_5px_rgba(0,0,0,0.35)]">
        <div className="flex h-[40px] items-start">
          <T c="mt-[21px] w-[100px] text-[15px] text-[#202124]">Restore pages?</T>
          <Cross c="ml-[183px] mt-[10px] size-[11px]" stroke="#5f6368" />
        </div>
        <T c="mt-[11px] w-[187px] text-[13px] text-[#202124]">Chrome didn't shut down correctly.</T>
        <div className="mt-[18px] flex gap-[8px] pl-[67px]">
          <button className="flex h-[32px] w-[73px] items-center justify-center rounded-[4px] bg-[#1a73e8]">
            <T c="w-[41px] text-[12px] font-semibold text-white">Restore</T>
          </button>
          <button className="flex h-[32px] w-[140px] items-center justify-center rounded-[4px] border border-[#dadce0] bg-white">
            <T c="w-[108px] text-[12px] text-[#1a73e8]">Open startup pages</T>
          </button>
        </div>
      </div>

      {/* activation watermark */}
      <div className="absolute left-[1599px] top-[948px] flex flex-col gap-[5px] text-[#b4b4b4]">
        <T c="w-[157px] text-[20px]">Activate Windows</T>
        <T c="w-[235px] text-[15px]">Go to Settings to activate Windows.</T>
      </div>
    </div>
  );
}

function Task({ c, hot, children }: { c: string; hot?: boolean; children: React.ReactNode }) {
  return (
    <span className={`flex h-full shrink-0 flex-col ${hot ? "bg-[#333333]" : ""} ${c}`}>
      <span className="flex h-[38px] items-center justify-center pt-[2px]">{children}</span>
      <span className="h-[2px] bg-[#76b9ed]" />
    </span>
  );
}

function Win10Taskbar() {
  return (
    <div className="flex h-[40px] shrink-0 items-center bg-black">
      <svg viewBox="0 0 16 16" className="ml-[16px] size-[16px] shrink-0">
        <path d="M0 2.200l6.500-.9v6.200H0zM7.300 1.200L16 0v7.500H7.300zM0 8.400h6.500v6.300L0 13.800zM7.300 8.400H16V16l-8.700-1.200z" fill="#fff" />
      </svg>
      <svg viewBox="0 0 18 18" className="ml-[31px] size-[17px] shrink-0">
        <circle cx="11" cy="6.500" r="5.700" fill="none" stroke="#fff" strokeWidth="1.300" />
        <path d="M7 10.500L.8 17" stroke="#fff" strokeWidth="1.300" />
      </svg>
      <svg viewBox="0 0 20 14" className="ml-[30px] h-[14px] w-[20px] shrink-0">
        <path d="M4 .6h12v12.800H4zM2.500 2.500h-2v9h2M17.500 2.500h2v9h-2" fill="none" stroke="#fff" strokeWidth="1.200" />
      </svg>
      <Task c="ml-[21px] w-[40px]">
        <svg viewBox="0 0 22 18" className="h-[18px] w-[22px]">
          <path d="M0 0h8l1.500 2H21v15H0z" fill="#ffd966" />
          <path d="M0 4h22v14H0z" fill="#ffe69a" />
          <path d="M4 18v-7h14v7h-4v-3.500H8V18z" fill="#3ab0e8" />
        </svg>
      </Task>
      <Chrome c="ml-[18px] size-[24px]" />
      <Task c="ml-[16px] w-[40px]">
        <span className="relative flex">
          <Ui c="size-[24px] bg-[#f04e23] text-[15px] text-white" />
          <svg viewBox="0 0 8 8" className="absolute bottom-0 right-0 size-[8px]">
            <path d="M1 4a3 3 0 0 1 5-2M7 4a3 3 0 0 1-5 2" fill="none" stroke="#fff" strokeWidth="1.200" />
          </svg>
        </span>
      </Task>
      <Task c="ml-[9px] w-[40px]">
        <Ui c="size-[24px] bg-[#034ea2] text-[15px] text-white" />
      </Task>
      <Task c="ml-[5px] w-[48px]" hot>
        <Chrome c="size-[23px]" />
      </Task>
      <span className="grow" />
      <svg viewBox="0 0 12 7" className="h-[7px] w-[12px]">
        <path d="M.5 6.500L6 1l5.500 5.500" fill="none" stroke="#fff" strokeWidth="1.200" />
      </svg>
      <svg viewBox="0 0 16 14" className="ml-[10px] h-[14px] w-[16px]">
        <path d="M4 2.500h11.500v8H4zM7 13.500h6M10 10.500v3M.5.5h4v4h-4zM2.500 4.500v9h3" fill="none" stroke="#fff" strokeWidth="1.100" />
      </svg>
      <svg viewBox="0 0 18 14" className="ml-[7px] h-[14px] w-[18px]">
        <path d="M.6 4.500h3L7 1.500v11l-3.400-3h-3zM9.500 5q1.500 2 0 4M12 3q2.800 4 0 8M14.500 1q4 6 0 12" fill="none" stroke="#fff" strokeWidth="1.100" />
      </svg>
      <div className="ml-[7px] flex w-[56px] flex-col items-center gap-[6px] pt-[1px] text-[12px] text-white">
        <T c="w-[43px]">7:00 AM</T>
        <T c="w-[52px]">8/27/2020</T>
      </div>
      <svg viewBox="0 0 16 16" className="ml-[16px] size-[16px]">
        <path d="M.6.6h14.800v12H10L8 15l-2-2.400H.6z" fill="none" stroke="#fff" strokeWidth="1.200" />
      </svg>
      <span className="ml-[20px] mr-[4px] h-full w-px bg-[#555]" />
    </div>
  );
}

export default function App() {
  return (
    <div className="flex h-[1080px] w-[3840px] overflow-hidden bg-white font-['Open_Sans','Noto_Sans',sans-serif]">
      <LeftWindow />
      <RightWindow />
    </div>
  );
}
